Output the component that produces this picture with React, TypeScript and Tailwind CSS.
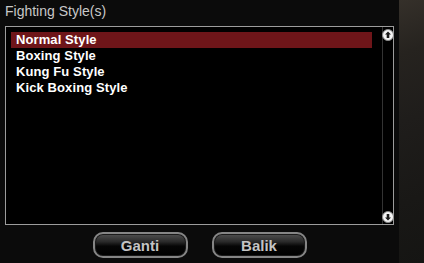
import React from 'react';

const styles = ['Normal Style', 'Boxing Style', 'Kung Fu Style', 'Kick Boxing Style'];

function ScrollArrow({ down = false }: { down?: boolean }) {
  return (
    <svg width="12" height="12" viewBox="0 0 12 12" className={down ? 'rotate-180' : ''}>
      <circle cx="6" cy="6" r="5.5" fill="#f4f4f4" stroke="#8a8a8a" strokeWidth="1" />
      <path d="M6 2.5 L9 5.5 L7.3 5.5 L7.3 9 L4.7 9 L4.7 5.5 L3 5.5 Z" fill="#1a1a1a" />
    </svg>
  );
}

function GameButton({ label }: { label: string }) {
  return (
    <button className="w-[95px] h-[26px] rounded-[10px] border-2 border-[#858585] bg-[linear-gradient(to_bottom,#505050_0%,#2a2a2a_35%,#060606_55%,#000_100%)] text-[15px] font-bold text-[#c4c4c4] leading-none shadow-[inset_0_0_0_1px_#1a1a1a]">
      {label}
    </button>
  );
}

export default function App() {
  return (
    <div className="w-[424px] h-[263px] flex bg-[#111] font-['Liberation_Sans',Arial,sans-serif] overflow-hidden">
      <div className="w-[399px] h-full bg-[#0b0b0b] flex flex-col">
        <div className="h-[26px] pl-[5px] pt-[4px] text-[14px] leading-[15px] text-[#c8c8c8]">
          Fighting Style(s)
        </div>
        <div className="ml-[5px] w-[389px] h-[199px] border border-[#9c9c9c] bg-black flex">
          <ul className="flex-1 pl-[5px] pt-[5px] pr-[10px]">
            {styles.map((s, i) => (
              <li
                key={s}
                className={`h-[16px] pl-[5px] text-[13px] font-bold leading-[16px] tracking-[0.1px] text-white ${
                  i === 0 ? 'bg-[#6e1519]' : ''
                }`}
              >
                {s}
              </li>
            ))}
          </ul>
          <div className="w-[11px] border-l border-[#333] flex flex-col justify-between items-center pt-[2px] pb-[1px]">
            <div className="-ml-[1px]">
              <ScrollArrow />
            </div>
            <div className="-ml-[1px]">
              <ScrollArrow down />
            </div>
          </div>
        </div>
        <div className="flex justify-center gap-[24px] mt-[7px]">
          <GameButton label="Ganti" />
          <GameButton label="Balik" />
        </div>
      </div>
      <div className="flex-1 h-full bg-[linear-gradient(160deg,#35302a_0%,#26231f_20%,#1f1d1b_45%,#191816_75%,#151513_100%)]" />
    </div>
  );
}
